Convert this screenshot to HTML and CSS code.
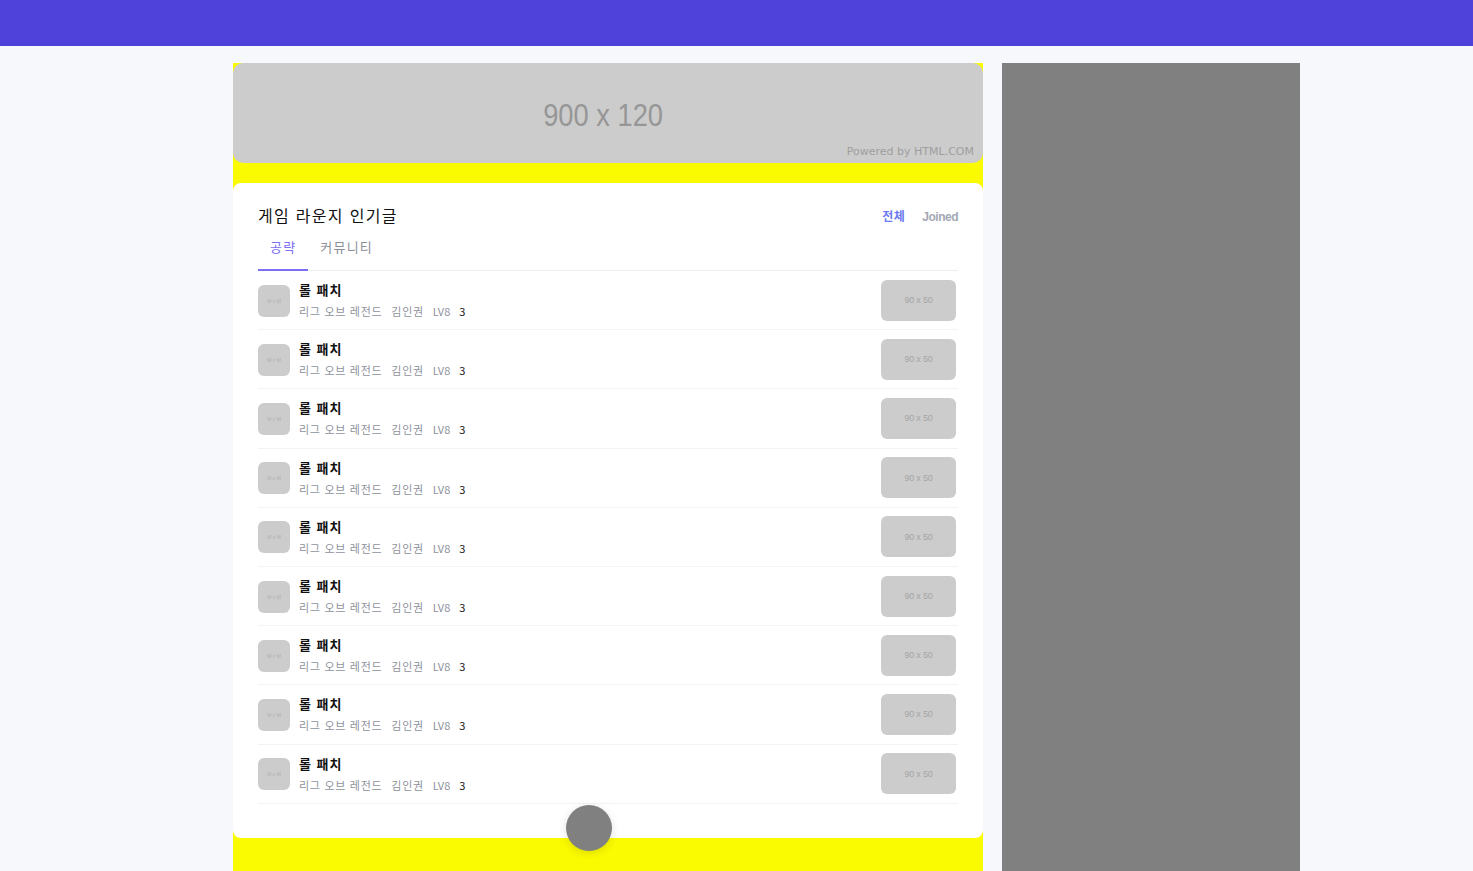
FILE: index.html
```html
<!DOCTYPE html>
<html lang="ko">
<head>
    <meta charset="UTF-8">
    <meta name="viewport" content="width=device-width, initial-scale=1.0">
    <title>게임 라운지 인기글</title>
    <link rel="stylesheet" href="styles.css">
</head>
<body>

    <div class="topbar"></div>

    <div class="layout">
        <div class="main">
            <div class="banner">
                <span class="banner-size">900 x 120</span>
                <span class="banner-credit">Powered by HTML.COM</span>
            </div>

            <div class="card">
                <div class="card-head">
                    <h2 class="card-title">게임 라운지 인기글</h2>
                    <div class="filters">
                        <span class="filter active">전체</span>
                        <span class="filter">Joined</span>
                    </div>
                </div>

                <div class="tabs">
                    <span class="tab active">공략</span>
                    <span class="tab">커뮤니티</span>
                </div>

                <ul class="posts" id="posts"></ul>

                <button class="fab"></button>
            </div>
        </div>

        <div class="sidebar"></div>
    </div>

    <script>
        const posts = document.getElementById("posts");
        for (let i = 0; i < 9; i++) {
            posts.innerHTML += `
                <li class="post">
                    <div class="avatar">M x M</div>
                    <div class="post-body">
                        <div class="post-title">롤 패치</div>
                        <div class="post-meta">
                            <span>리그 오브 레전드</span>
                            <span>김인권</span>
                            <span class="level">LV8</span>
                            <span class="count">3</span>
                        </div>
                    </div>
                    <div class="thumb">90 x 50</div>
                </li>
            `;
        }
    </script>

</body>
</html>
```

FILE: styles.css
```css
body {
    font-family: "Noto Sans CJK KR", "Noto Sans", sans-serif;
    margin: 0;
    padding: 0;
    background-color: #f7f8fc;
    height: 871px;
    overflow: hidden;
}
.topbar {
    height: 46px;
    background: #4f42da;
}
.layout {
    display: flex;
    gap: 19px;
    margin-left: 233px;
    padding-top: 17px;
    height: 808px;
}
.main {
    width: 750px;
    background: #fafa00;
}
.sidebar {
    width: 298px;
    background: #808080;
}
.banner {
    position: relative;
    height: 100px;
    background: #cccccc;
    border-radius: 10px;
    display: flex;
    align-items: center;
    justify-content: center;
}
.banner-size {
    font-family: "Liberation Sans", Arial, sans-serif;
    font-size: 31px;
    color: #969696;
    transform: scaleX(0.88);
    margin-top: 5px;
    margin-left: -10px;
}
.banner-credit {
    position: absolute;
    right: 9px;
    bottom: 5px;
    font-family: "DejaVu Sans", sans-serif;
    font-size: 11px;
    color: #9e9e9e;
}
.card {
    position: relative;
    margin-top: 20px;
    background: #fff;
    border-radius: 8px;
    padding: 20px 25px 34px;
}
.card-head {
    display: flex;
    justify-content: space-between;
    align-items: center;
}
.card-title {
    margin: 0;
    font-size: 16px;
    font-weight: 400;
    color: #111;
    line-height: 24px;
    letter-spacing: 1.3px;
}
.filters {
    display: flex;
    align-items: baseline;
    gap: 17px;
    font-family: "Liberation Sans", "Noto Sans CJK KR", sans-serif;
    font-size: 12px;
    font-weight: 700;
    color: #a4a8b4;
}
.filter.active {
    color: #6b7af2;
    letter-spacing: 0.5px;
}
.filter:last-child {
    letter-spacing: -0.5px;
}
.tabs {
    display: flex;
    margin-top: 4px;
    border-bottom: 1px solid #eceef1;
}
.tab {
    padding: 6px 12px 12px;
    font-size: 13px;
    line-height: 20px;
    letter-spacing: 1.2px;
    color: #8b8f98;
    border-bottom: 2px solid transparent;
    margin-bottom: -1px;
}
.tab.active {
    color: #7b6ff3;
    border-bottom-color: #7b6ff3;
}
.posts {
    list-style: none;
    margin: 0;
    padding: 0;
}
.post {
    display: flex;
    align-items: center;
    height: 59.2px;
    box-sizing: border-box;
    border-bottom: 1px solid #f2f3f5;
}
.avatar {
    width: 32px;
    height: 32px;
    border-radius: 6px;
    background: #cccccc;
    color: #b0b0b0;
    font-family: "Liberation Sans", sans-serif;
    font-size: 5px;
    display: flex;
    align-items: center;
    justify-content: center;
    margin-top: 1px;
}
.post-body {
    flex: 1;
    margin-left: 9px;
}
.post-title {
    font-size: 13px;
    font-weight: 700;
    color: #111;
    line-height: 18px;
    letter-spacing: 1px;
}
.post-meta {
    display: flex;
    gap: 9px;
    margin-top: 4px;
    font-size: 11px;
    line-height: 16px;
    letter-spacing: 0.7px;
    color: #8e929c;
}
.post-meta .level {
    letter-spacing: 0;
}
.post-meta .count {
    color: #222;
}
.thumb {
    width: 75px;
    height: 41px;
    margin-right: 2px;
    border-radius: 6px;
    background: #cccccc;
    color: #a5a5a5;
    font-family: "Liberation Sans", sans-serif;
    font-size: 9px;
    letter-spacing: -0.2px;
    display: flex;
    align-items: center;
    justify-content: center;
}
.fab {
    position: absolute;
    left: 333px;
    bottom: -13px;
    width: 46px;
    height: 46px;
    border: none;
    border-radius: 50%;
    background: #808080;
    box-shadow: 0 2px 8px rgba(0, 0, 0, 0.12);
    padding: 0;
}
```
